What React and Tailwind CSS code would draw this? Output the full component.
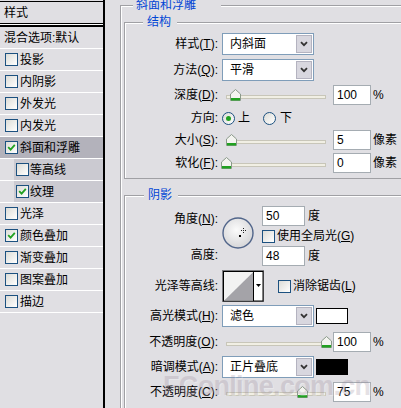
import React from 'react';

const layers = [
  { name: '投影' },
  { name: '内阴影' },
  { name: '外发光' },
  { name: '内发光' },
  { name: '斜面和浮雕', checked: true, active: true },
  { name: '等高线', sub: true },
  { name: '纹理', sub: true, checked: true },
  { name: '光泽' },
  { name: '颜色叠加', checked: true },
  { name: '渐变叠加' },
  { name: '图案叠加' },
  { name: '描边' },
];

const Check = ({ checked }) => (
  <span className="w-[13px] h-[13px] shrink-0 border border-[#1c5180] bg-linear-to-br from-[#dcdcd7] to-white flex items-center justify-center">
    {checked && (
      <svg width="9" height="9" viewBox="0 0 9 9">
        <path d="M1.2 4.2 L3.6 6.6 L7.8 1.8" stroke="#21a121" strokeWidth="1.8" fill="none" />
      </svg>
    )}
  </span>
);

const Radio = ({ on }) => (
  <span className="w-[13px] h-[13px] shrink-0 rounded-full border border-[#1c5180] bg-linear-to-br from-[#dcdcd7] to-white flex items-center justify-center">
    {on && <span className="w-[5px] h-[5px] rounded-full bg-[#21a121]" />}
  </span>
);

const Select = ({ value }) => (
  <div className="w-[92px] h-[22px] border border-[#7f9db9] bg-white flex items-center">
    <span className="flex-1 pl-[7px] leading-[14px]">{value}</span>
    <span className="w-[16px] h-[18px] mr-[1px] bg-[#d8d7df] border border-[#b4b3c0] flex items-center justify-center">
      <svg width="8" height="6" viewBox="0 0 8 6">
        <path d="M1 1.2 L4 4.2 L7 1.2" stroke="#333" strokeWidth="1.8" fill="none" />
      </svg>
    </span>
  </div>
);

const Input = ({ value, w = 'w-[38px]' }) => (
  <div className={`${w} h-[20px] border border-[#a5acb2] bg-white pl-[3px] flex items-center leading-[14px]`}>
    {value}
  </div>
);

const Thumb = () => (
  <svg width="11" height="12" viewBox="0 0 11 12">
    <path d="M0.5 5 L5.5 0.5 L10.5 5 L10.5 11.5 L0.5 11.5 Z" fill="#f4f4f0" stroke="#8a9a8a" />
    <rect x="1" y="9" width="9" height="2.5" fill="#21a121" />
  </svg>
);

const Slider = ({ pos }) => (
  <div className="relative w-[108px] h-[20px] shrink-0">
    <div className="absolute left-[4px] w-[100px] top-[10px] h-[4px] bg-[#f1efe4] border border-[#c8c6b9]" />
    <div className="absolute top-[4px]" style={{ left: pos - 5 }}>
      <Thumb />
    </div>
  </div>
);

const Label = ({ children }) => (
  <div className="w-[93px] shrink-0 text-right leading-[16px] whitespace-nowrap">{children}</div>
);

const U = ({ children }) => <span className="underline underline-offset-1">{children}</span>;

const Legend = ({ children, className }) => (
  <legend className={`text-[#0046d5] bg-[#e0dfe3] ${className}`}>{children}</legend>
);

const App = () => {
  return (
    <div className="relative w-[401px] h-[408px] overflow-hidden bg-[#e0dfe3] flex text-[12px] text-black font-['Liberation_Sans','Noto_Sans_CJK_SC',sans-serif]">
      {/* Style list */}
      <div className="w-[105px] shrink-0 h-full border-r-2 border-black">
        <div className="mt-[1px] h-[23px] border-y border-black flex items-center pl-[4px]">样式</div>
        <div className="h-[1px] bg-white" />
        <div className="h-[2px] bg-black" />
        <div className="h-[22px] border-b border-white flex items-center pl-[4px]">混合选项:默认</div>
        {layers.map((l) => (
          <div
            key={l.name}
            className={`h-[22px] border-b border-white flex ${l.active ? 'bg-[#b3b2bb]' : ''}`}
          >
            {l.sub ? (
              <div className="ml-[14px] flex-1 bg-[#cbcad1] flex items-center pl-[2px] gap-[1px]">
                <Check checked={l.checked} />
                <span>{l.name}</span>
              </div>
            ) : (
              <div className="flex-1 flex items-center pl-[5px] gap-[2px]">
                <Check checked={l.checked} />
                <span>{l.name}</span>
              </div>
            )}
          </div>
        ))}
      </div>

      {/* Options */}
      <div className="flex-1 pl-[15px]">
        <fieldset className="-mt-[1px] w-[300px] h-[440px] border border-[#a0a0a4] shadow-[inset_1px_1px_0_#ffffff] p-0 m-0">
          <Legend className="ml-[12px] pl-[3px] pr-[25px] leading-[12px]">斜面和浮雕</Legend>

          {/* 结构 */}
          <fieldset className="mt-[3px] ml-[3px] w-[300px] border border-[#a0a0a4] shadow-[inset_1px_1px_0_#ffffff] p-0 pb-[5px]">
            <Legend className="ml-[18px] pl-[4px] pr-[6px] leading-[16px]">结构</Legend>
            <div className="mt-[3px] h-[22px] flex items-center gap-[4px]">
              <Label>样式(<U>T</U>):</Label>
              <Select value="内斜面" />
            </div>
            <div className="mt-[4px] h-[22px] flex items-center gap-[4px]">
              <Label>方法(<U>Q</U>):</Label>
              <Select value="平滑" />
            </div>
            <div className="mt-[4px] h-[20px] flex items-center gap-[4px]">
              <Label>深度(<U>D</U>):</Label>
              <Slider pos={13} />
              <div className="ml-[-1px]"><Input value="100" /></div>
              <span className="ml-[-2px]">%</span>
            </div>
            <div className="mt-[5px] h-[16px] flex items-center gap-[4px]">
              <Label>方向:</Label>
              <Radio on />
              <span className="ml-[-1px]">上</span>
              <span className="ml-[9px]"><Radio /></span>
              <span className="ml-[0px]">下</span>
            </div>
            <div className="mt-[4px] h-[20px] flex items-center gap-[4px]">
              <Label>大小(<U>S</U>):</Label>
              <Slider pos={9} />
              <div className="ml-[-1px]"><Input value="5" /></div>
              <span className="ml-[-2px]">像素</span>
            </div>
            <div className="mt-[3px] h-[20px] flex items-center gap-[4px]">
              <Label>软化(<U>F</U>):</Label>
              <Slider pos={4} />
              <div className="ml-[-1px]"><Input value="0" /></div>
              <span className="ml-[-2px]">像素</span>
            </div>
          </fieldset>

          {/* 阴影 */}
          <fieldset className="mt-[8px] ml-[3px] w-[300px] h-[260px] border border-[#a0a0a4] shadow-[inset_1px_1px_0_#ffffff] p-0">
            <Legend className="ml-[19px] pl-[4px] pr-[6px] leading-[16px]">阴影</Legend>
            <div className="flex">
              <div className="flex flex-col">
                <div className="mt-[8px] h-[16px]"><Label>角度(<U>N</U>):</Label></div>
                <div className="mt-[20px] h-[16px]"><Label>高度:</Label></div>
              </div>
              <div className="ml-[4px] mt-[14px] w-[32px] h-[32px]">
                <svg width="32" height="32" viewBox="0 0 32 32">
                  <defs>
                    <radialGradient id="dial" cx="45%" cy="40%" r="60%">
                      <stop offset="0%" stopColor="#fbfbfb" />
                      <stop offset="100%" stopColor="#d6d6d8" />
                    </radialGradient>
                  </defs>
                  <circle cx="16" cy="16" r="15" fill="url(#dial)" stroke="#51658a" strokeWidth="1.4" />
                  <rect x="17" y="18" width="2" height="2" fill="#000" />
                  <path d="M21.5 11 V16 M19 13.5 H24" stroke="#222" strokeWidth="1" strokeDasharray="1 1" />
                </svg>
              </div>
              <div className="ml-[8px] flex flex-col">
                <div className="mt-[3px] h-[20px] flex items-center">
                  <Input value="50" w="w-[43px]" />
                  <span className="ml-[3px]">度</span>
                </div>
                <div className="mt-[2px] h-[16px] flex items-center gap-[2px]">
                  <Check />
                  <span>使用全局光(<U>G</U>)</span>
                </div>
                <div className="mt-[2px] h-[20px] flex items-center">
                  <Input value="48" w="w-[43px]" />
                  <span className="ml-[3px]">度</span>
                </div>
              </div>
            </div>

            <div className="mt-[4px] h-[32px] flex items-center">
              <Label>光泽等高线:</Label>
              <div className="ml-[4px] w-[42px] h-[32px]">
                <svg width="42" height="32" viewBox="0 0 42 32">
                  <rect x="0.5" y="0.5" width="41" height="31" fill="#ffffff" stroke="#7a7a7e" />
                  <rect x="1.5" y="1.5" width="39.5" height="29.5" fill="none" stroke="#000" />
                  <path d="M2 30.5 L31 2 L31 30.5 Z" fill="#a4a3a8" />
                  <path d="M2 2 L31 2 L2 30.5 Z" fill="#f2f2f2" />
                  <path d="M31.5 2 V31" stroke="#000" />
                  <path d="M34 14 H39 L36.5 17 Z" fill="#000" />
                </svg>
              </div>
              <div className="ml-[14px] flex items-center gap-[2px]">
                <Check />
                <span>消除锯齿(<U>L</U>)</span>
              </div>
            </div>

            <div className="mt-[3px] h-[22px] flex items-center gap-[4px]">
              <Label>高光模式(<U>H</U>):</Label>
              <Select value="滤色" />
              <div className="ml-[-2px] w-[32px] h-[16px] bg-white border border-black" />
            </div>
            <div className="mt-[5px] h-[20px] flex items-center gap-[4px]">
              <Label>不透明度(<U>O</U>):</Label>
              <Slider pos={104} />
              <div className="ml-[-1px]"><Input value="100" /></div>
              <span className="ml-[-2px]">%</span>
            </div>
            <div className="mt-[4px] h-[22px] flex items-center gap-[4px]">
              <Label>暗调模式(<U>A</U>):</Label>
              <Select value="正片叠底" />
              <div className="ml-[-2px] w-[32px] h-[16px] bg-black border border-black" />
            </div>
            <div className="mt-[4px] h-[20px] flex items-center gap-[4px]">
              <Label>不透明度(<U>C</U>):</Label>
              <Slider pos={80} />
              <div className="ml-[-1px]"><Input value="75" /></div>
              <span className="ml-[-2px]">%</span>
            </div>
          </fieldset>
        </fieldset>
      </div>

      {/* watermark */}
      <div className="absolute left-[163px] top-[366px] text-[27px] font-bold tracking-tight text-[#9a8c9c] opacity-25 pointer-events-none font-['Liberation_Sans',sans-serif] [text-shadow:1px_1px_0_#ffffff]">
        FConline.com.cn
      </div>
    </div>
  );
};

export default App;
